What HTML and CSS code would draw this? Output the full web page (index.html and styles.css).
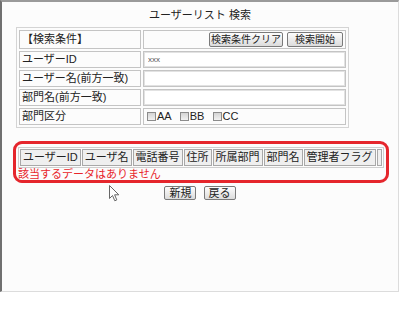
FILE: index.html
```html
<!DOCTYPE html>
<html lang="ja">
<head>
    <meta charset="UTF-8">
    <title>ユーザーリスト 検索</title>
    <link rel="stylesheet" href="styles.css">
</head>
<body>
    <div class="window">
        <h1 class="title">ユーザーリスト 検索</h1>

        <table class="search">
            <tr>
                <td class="label">【検索条件】</td>
                <td class="value actions">
                    <button class="btn btn-clear">検索条件クリア</button><button class="btn btn-start">検索開始</button>
                </td>
            </tr>
            <tr>
                <td class="label">ユーザーID</td>
                <td class="value"><input type="text" class="field" value="xxx"></td>
            </tr>
            <tr>
                <td class="label">ユーザー名(前方一致)</td>
                <td class="value"><input type="text" class="field"></td>
            </tr>
            <tr>
                <td class="label">部門名(前方一致)</td>
                <td class="value"><input type="text" class="field"></td>
            </tr>
            <tr>
                <td class="label">部門区分</td>
                <td class="value checks">
                    <label class="check"><input type="checkbox">AA</label>
                    <label class="check"><input type="checkbox">BB</label>
                    <label class="check"><input type="checkbox">CC</label>
                </td>
            </tr>
        </table>

        <div class="result">
            <table class="list">
                <tr>
                    <th>ユーザーID</th>
                    <th>ユーザ名</th>
                    <th>電話番号</th>
                    <th>住所</th>
                    <th>所属部門</th>
                    <th>部門名</th>
                    <th>管理者フラグ</th>
                    <th class="blank"></th>
                </tr>
            </table>
            <p class="empty">該当するデータはありません</p>
        </div>

        <div class="nav">
            <button class="btn nav-btn">新規</button>
            <button class="btn nav-btn">戻る</button>
        </div>

        <!-- mouse pointer -->
        <svg class="cursor" width="11" height="17" viewBox="0 0 11 17">
            <path d="M0.5 0.5 L0.5 13.5 L3.5 10.5 L5.8 15.8 L7.8 14.9 L5.6 9.8 L9.8 9.8 Z" fill="#fff" stroke="#666" stroke-width="1"/>
        </svg>
    </div>
</body>
</html>
```

FILE: styles.css
```css
body {
    margin: 0;
    background: #fff;
    font-family: "Liberation Sans", "Noto Sans CJK JP", sans-serif;
    font-size: 11px;
    color: #222;
}
.window {
    position: relative;
    box-sizing: border-box;
    width: 399px;
    height: 292px;
    border-left: 2px solid #707070;
    border-top: 2px solid #9a9a9a;
    border-right: 1px solid #dcdcdc;
    border-bottom: 1px solid #dcdcdc;
    background: #fcfcfc;
}
.title {
    margin: 0;
    padding-top: 7px;
    font-size: 11px;
    font-weight: normal;
    line-height: 13px;
    text-align: center;
}
.search {
    margin: 5px 0 0 14px;
    border: 1px solid #d4d4d4;
    border-spacing: 2px;
}
.search td {
    border: 1px solid #c4c4c4;
    padding: 0 2px;
    line-height: 15px;
    white-space: nowrap;
}
.search .label {
    width: 116px;
}
.search .value {
    width: 197px;
    padding: 0;
}
.search .actions {
    padding: 1px 2px;
    text-align: right;
}
.search .checks {
    padding: 0 2px;
}
.btn {
    box-sizing: border-box;
    height: 15px;
    margin: 0 0 0 4px;
    padding: 0;
    border: 1px solid #7a7a7a;
    border-radius: 2px;
    background: linear-gradient(#fdfdfd, #dcdcdc);
    font-family: "Liberation Sans", "Noto Sans CJK JP", sans-serif;
    font-size: 10px;
    line-height: 13px;
    color: #222;
    vertical-align: top;
}
.btn-clear {
    width: 74px;
}
.btn-start {
    width: 56px;
}
.field {
    display: block;
    box-sizing: border-box;
    width: 100%;
    height: 15px;
    margin: 0;
    padding: 0 3px;
    border: 1px solid #e2e2e2;
    background: #fff;
    font-family: "Liberation Sans", sans-serif;
    font-size: 8px;
    color: #555;
}
.check {
    margin-right: 4px;
}
.check input {
    appearance: none;
    box-sizing: border-box;
    width: 9px;
    height: 9px;
    margin: 0 1px 0 1px;
    border: 1px solid #8c8c8c;
    background: linear-gradient(#d4d4d4, #f2f2f2);
    vertical-align: -1px;
}
.result {
    box-sizing: border-box;
    width: 376px;
    margin: 13px 0 0 11px;
    padding: 3px 0 0 2px;
    border: 3px solid #e5262c;
    border-radius: 9px;
}
.list {
    border: 1px solid #cfcfcf;
    border-spacing: 1px;
}
.list th {
    padding: 0 2px;
    border: 1px solid #a8a8a8;
    background: #efefef;
    font-weight: normal;
    line-height: 15px;
    text-align: left;
    white-space: nowrap;
}
.list .blank {
    width: 3px;
    padding: 0;
}
.empty {
    margin: 0;
    color: #e8262b;
    line-height: 12px;
}
.nav {
    margin-top: 3px;
    text-align: center;
}
.nav-btn {
    height: 14px;
    margin: 0 2px;
    padding: 0 4px;
    font-size: 11px;
    line-height: 12px;
}
.cursor {
    position: absolute;
    left: 107px;
    top: 183px;
}
```
